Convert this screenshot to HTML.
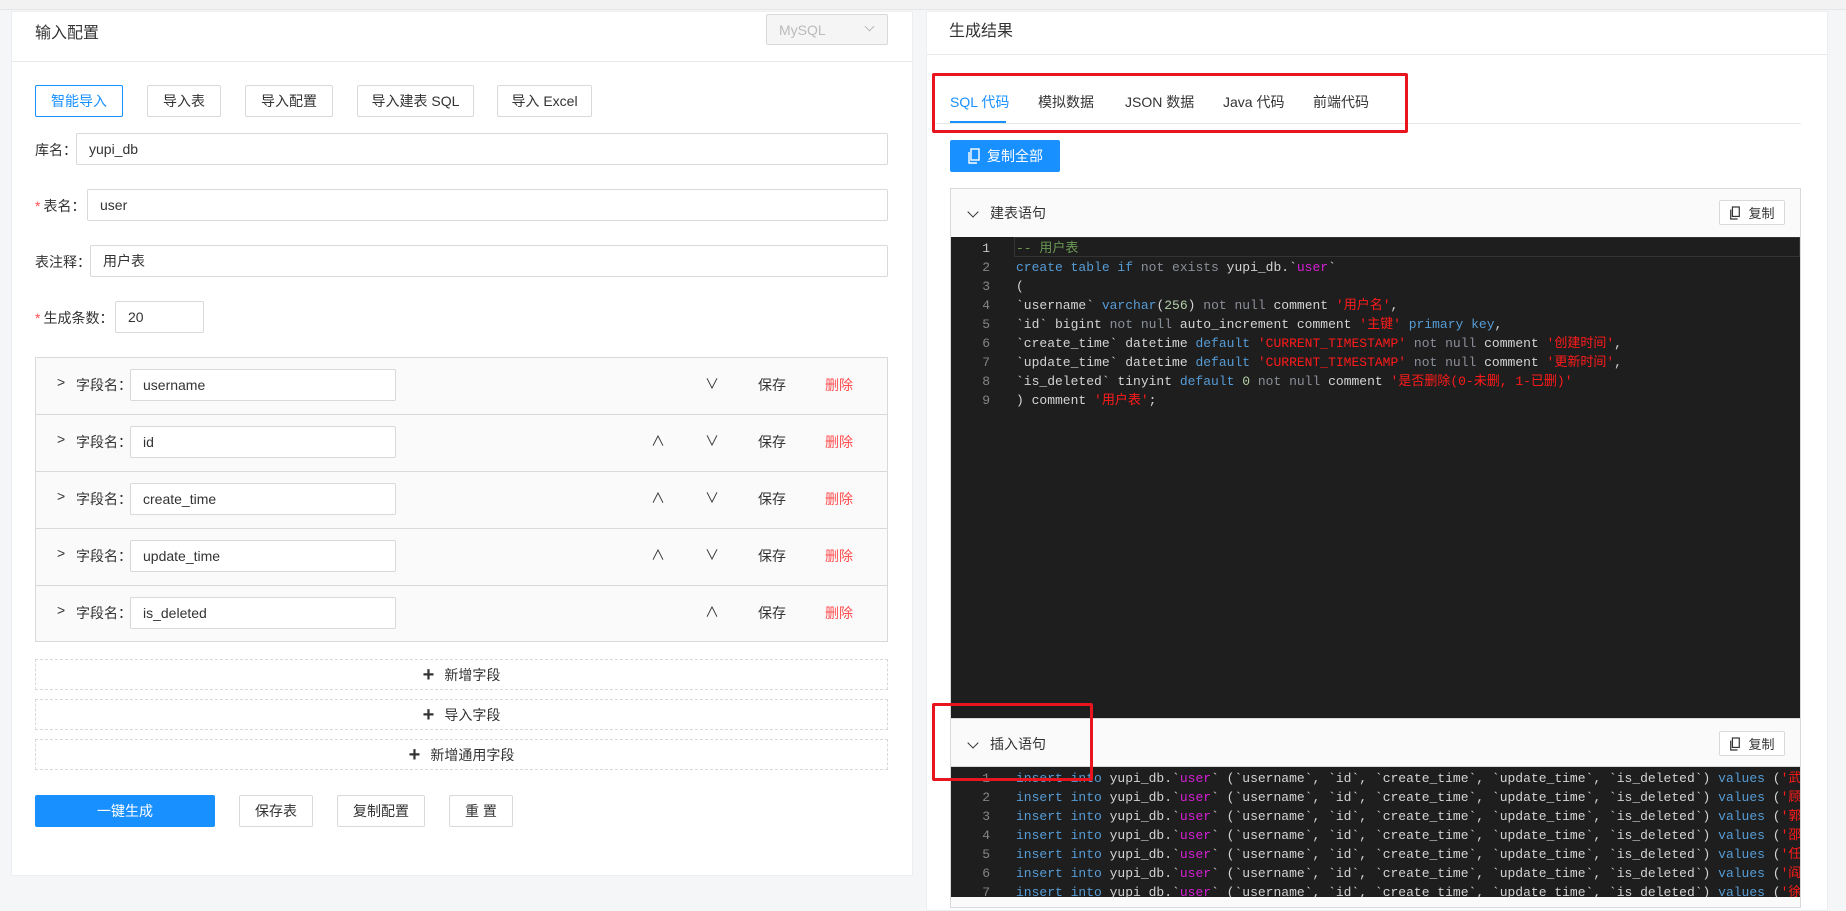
<!DOCTYPE html>
<html><head><meta charset="utf-8"><style>
*{box-sizing:border-box;margin:0;padding:0}
body{width:1846px;height:897px;overflow:hidden;background:#f5f6f8;font-family:"Liberation Sans","Noto Sans CJK SC",sans-serif;font-size:14px;color:#333;position:relative}
.a{position:absolute}
.card{background:#fff;border:1px solid #eceef1}
.btn{position:absolute;border:1px solid #d9d9d9;background:#fff;border-radius:2px;display:flex;align-items:center;justify-content:center;font-size:14px;color:#333}
.inp{position:absolute;border:1px solid #d9d9d9;background:#fff;border-radius:2px;padding-left:12px;display:flex;align-items:center;font-size:14px;color:#333}
.lbl{position:absolute;font-size:14px;color:#333}
.req{color:#ff4d4f;margin-right:3px}
.row{position:absolute;left:35px;width:853px;height:57px}
.row .arrow{position:absolute;left:22px;top:17px;font-size:14px;color:#333}
.hl{position:absolute;left:35px;width:853px;height:1px;background:#d9d9d9}
.dash{position:absolute;left:35px;width:853px;height:31px;border:1px dashed #d9d9d9;display:flex;align-items:center;justify-content:center;font-size:14px;color:#333}
.dash b{font-size:20px;font-weight:bold;margin-right:10px;line-height:1}
.code{position:absolute;background:#1e1e1e;font-family:"Liberation Mono","DejaVu Sans Mono","Noto Sans CJK SC",monospace;font-size:13px;line-height:19px;color:#d4d4d4;overflow:hidden}
.code .ln{position:absolute;left:0;width:39px;text-align:right;color:#858585}
.code .tx{position:absolute;left:65px;white-space:pre}
.k{color:#569cd6}.g{color:#8b8f99}.s{color:#ff1a1a}.m{color:#d61fd6}.c{color:#6a9955}.n{color:#b5cea8}
.chev{display:inline-block;width:8px;height:8px;border-right:1.5px solid #333;border-bottom:1.5px solid #333}
</style></head><body>
<div class="a" style="left:0;top:0;width:1846px;height:10px;background:#f2f2f2;border-bottom:1px solid #e6e6e6"></div>

<!-- Left card -->
<div class="a card" style="left:11px;top:11px;width:902px;height:865px"></div>
<div class="lbl" style="left:35px;top:19px;font-size:16px">输入配置</div>
<div class="a" style="left:12px;top:61px;width:900px;height:1px;background:#e8e8e8"></div>
<div class="btn" style="left:766px;top:14px;width:122px;height:31px;background:#f5f5f5;color:#bbb;justify-content:flex-start;padding-left:12px">MySQL<span style="position:absolute;right:14px;top:8px;width:7px;height:7px;border-right:1px solid #bbb;border-bottom:1px solid #bbb;transform:rotate(45deg)"></span></div>

<div class="btn" style="left:35px;top:85px;width:88px;height:32px;border-color:#1890ff;color:#1890ff">智能导入</div>
<div class="btn" style="left:147px;top:85px;width:74px;height:32px">导入表</div>
<div class="btn" style="left:245px;top:85px;width:88px;height:32px">导入配置</div>
<div class="btn" style="left:357px;top:85px;width:117px;height:32px">导入建表 SQL</div>
<div class="btn" style="left:497px;top:85px;width:95px;height:32px">导入 Excel</div>

<div class="lbl" style="left:35px;top:140px">库名：</div>
<div class="inp" style="left:76px;top:133px;width:812px;height:32px">yupi_db</div>
<div class="lbl" style="left:35px;top:196px"><span class="req">*</span>表名：</div>
<div class="inp" style="left:87px;top:189px;width:801px;height:32px">user</div>
<div class="lbl" style="left:35px;top:252px">表注释：</div>
<div class="inp" style="left:90px;top:245px;width:798px;height:32px">用户表</div>
<div class="lbl" style="left:35px;top:308px"><span class="req">*</span>生成条数：</div>
<div class="inp" style="left:115px;top:301px;width:89px;height:32px">20</div>

<div class="a" style="left:35px;top:357px;width:853px;height:285px;border:1px solid #d9d9d9;background:#fafafa"></div>
<div class="hl" style="top:414px"></div>
<div class="hl" style="top:471px"></div>
<div class="hl" style="top:528px"></div>
<div class="hl" style="top:585px"></div>
<div class="row" style="top:357px"><span class="arrow">&gt;</span><span class="lbl" style="left:41px;top:18px">字段名：</span><div class="inp" style="left:95px;top:12px;width:266px;height:32px">username</div><span class="lbl" style="left:670px;top:17px">∨</span><span class="lbl" style="left:723px;top:18px">保存</span><span class="lbl" style="left:790px;top:18px;color:#ff4d4f">删除</span></div>
<div class="row" style="top:414px"><span class="arrow">&gt;</span><span class="lbl" style="left:41px;top:18px">字段名：</span><div class="inp" style="left:95px;top:12px;width:266px;height:32px">id</div><span class="lbl" style="left:616px;top:17px">∧</span><span class="lbl" style="left:670px;top:17px">∨</span><span class="lbl" style="left:723px;top:18px">保存</span><span class="lbl" style="left:790px;top:18px;color:#ff4d4f">删除</span></div>
<div class="row" style="top:471px"><span class="arrow">&gt;</span><span class="lbl" style="left:41px;top:18px">字段名：</span><div class="inp" style="left:95px;top:12px;width:266px;height:32px">create_time</div><span class="lbl" style="left:616px;top:17px">∧</span><span class="lbl" style="left:670px;top:17px">∨</span><span class="lbl" style="left:723px;top:18px">保存</span><span class="lbl" style="left:790px;top:18px;color:#ff4d4f">删除</span></div>
<div class="row" style="top:528px"><span class="arrow">&gt;</span><span class="lbl" style="left:41px;top:18px">字段名：</span><div class="inp" style="left:95px;top:12px;width:266px;height:32px">update_time</div><span class="lbl" style="left:616px;top:17px">∧</span><span class="lbl" style="left:670px;top:17px">∨</span><span class="lbl" style="left:723px;top:18px">保存</span><span class="lbl" style="left:790px;top:18px;color:#ff4d4f">删除</span></div>
<div class="row" style="top:585px"><span class="arrow">&gt;</span><span class="lbl" style="left:41px;top:18px">字段名：</span><div class="inp" style="left:95px;top:12px;width:266px;height:32px">is_deleted</div><span class="lbl" style="left:670px;top:17px">∧</span><span class="lbl" style="left:723px;top:18px">保存</span><span class="lbl" style="left:790px;top:18px;color:#ff4d4f">删除</span></div>

<div class="dash" style="top:659px"><b>+</b>新增字段</div>
<div class="dash" style="top:699px"><b>+</b>导入字段</div>
<div class="dash" style="top:739px"><b>+</b>新增通用字段</div>

<div class="btn" style="left:35px;top:795px;width:180px;height:32px;background:#1890ff;border-color:#1890ff;color:#fff">一键生成</div>
<div class="btn" style="left:239px;top:795px;width:74px;height:32px">保存表</div>
<div class="btn" style="left:337px;top:795px;width:88px;height:32px">复制配置</div>
<div class="btn" style="left:449px;top:795px;width:64px;height:32px">重 置</div>

<!-- Right card -->
<div class="a card" style="left:926px;top:11px;width:902px;height:900px"></div>
<div class="lbl" style="left:949px;top:17px;font-size:16px">生成结果</div>
<div class="a" style="left:927px;top:54px;width:900px;height:1px;background:#e8e8e8"></div>
<div class="lbl" style="left:950px;top:92px;color:#1890ff">SQL 代码</div>
<div class="lbl" style="left:1038px;top:92px">模拟数据</div>
<div class="lbl" style="left:1125px;top:92px">JSON 数据</div>
<div class="lbl" style="left:1223px;top:92px">Java 代码</div>
<div class="lbl" style="left:1313px;top:92px">前端代码</div>
<div class="a" style="left:935px;top:123px;width:866px;height:1px;background:#e8e8e8"></div>
<div class="a" style="left:950px;top:121px;width:56px;height:2px;background:#1890ff"></div>
<div class="a" style="left:932px;top:73px;width:476px;height:60px;border:3px solid #e8141e;border-radius:2px"></div>

<div class="btn" style="left:950px;top:140px;width:110px;height:32px;background:#1890ff;border-color:#1890ff;color:#fff"><svg width="14" height="16" viewBox="0 0 14 16" style="margin-right:6px"><rect x="4" y="1" width="8" height="11" fill="none" stroke="#fff" stroke-width="1.4"/><path d="M2 4v11h8" fill="none" stroke="#fff" stroke-width="1.4"/></svg>复制全部</div>

<div class="a" style="left:950px;top:188px;width:851px;height:720px;border:1px solid #d9d9d9;background:#fafafa"></div>
<div class="a" style="left:969px;top:203px"><span class="chev" style="transform:rotate(45deg)"></span></div>
<div class="lbl" style="left:990px;top:203px">建表语句</div>
<div class="btn" style="left:1719px;top:200px;width:66px;height:25px;font-size:13px"><svg width="12" height="14" viewBox="0 0 14 16" style="margin-right:7px"><rect x="4" y="1" width="8" height="11" fill="none" stroke="#333" stroke-width="1.4"/><path d="M2 4v11h8" fill="none" stroke="#333" stroke-width="1.4"/></svg>复制</div>

<div class="code" style="left:951px;top:237px;width:849px;height:481px">
<div class="a" style="left:63px;top:0;width:786px;height:20px;border:1px solid #333"></div>
<div class="ln" style="top:2px;color:#c6c6c6">1<br><span style="color:#858585">2<br>3<br>4<br>5<br>6<br>7<br>8<br>9</span></div>
<div class="tx" style="top:2px"><span class="c">-- 用户表</span>
<span class="k">create table if</span> <span class="g">not exists</span> yupi_db.`<span class="m">user</span>`
(
`username` <span class="k">varchar</span>(<span class="n">256</span>) <span class="g">not null</span> comment <span class="s">'用户名'</span>,
`id` bigint <span class="g">not null</span> auto_increment comment <span class="s">'主键'</span> <span class="k">primary key</span>,
`create_time` datetime <span class="k">default</span> <span class="s">'CURRENT_TIMESTAMP'</span> <span class="g">not null</span> comment <span class="s">'创建时间'</span>,
`update_time` datetime <span class="k">default</span> <span class="s">'CURRENT_TIMESTAMP'</span> <span class="g">not null</span> comment <span class="s">'更新时间'</span>,
`is_deleted` tinyint <span class="k">default</span> <span class="n">0</span> <span class="g">not null</span> comment <span class="s">'是否删除(0-未删, 1-已删)'</span>
) comment <span class="s">'用户表'</span>;</div>
</div>

<div class="a" style="left:951px;top:718px;width:849px;height:49px;background:#fafafa;border-top:1px solid #d9d9d9;border-bottom:1px solid #d9d9d9"></div>
<div class="a" style="left:969px;top:734px"><span class="chev" style="transform:rotate(45deg)"></span></div>
<div class="lbl" style="left:990px;top:734px">插入语句</div>
<div class="btn" style="left:1719px;top:731px;width:66px;height:25px;font-size:13px"><svg width="12" height="14" viewBox="0 0 14 16" style="margin-right:7px"><rect x="4" y="1" width="8" height="11" fill="none" stroke="#333" stroke-width="1.4"/><path d="M2 4v11h8" fill="none" stroke="#333" stroke-width="1.4"/></svg>复制</div>

<div class="code" style="left:951px;top:767px;width:849px;height:130px">
<div class="ln" style="top:2px">1<br>2<br>3<br>4<br>5<br>6<br>7</div>
<div class="tx" style="top:2px"><span class="k">insert into</span> yupi_db.`<span class="m">user</span>` (`username`, `id`, `create_time`, `update_time`, `is_deleted`) <span class="k">values</span> (<span class="s">'武金</span>
<span class="k">insert into</span> yupi_db.`<span class="m">user</span>` (`username`, `id`, `create_time`, `update_time`, `is_deleted`) <span class="k">values</span> (<span class="s">'顾明</span>
<span class="k">insert into</span> yupi_db.`<span class="m">user</span>` (`username`, `id`, `create_time`, `update_time`, `is_deleted`) <span class="k">values</span> (<span class="s">'郭峻</span>
<span class="k">insert into</span> yupi_db.`<span class="m">user</span>` (`username`, `id`, `create_time`, `update_time`, `is_deleted`) <span class="k">values</span> (<span class="s">'邵伟</span>
<span class="k">insert into</span> yupi_db.`<span class="m">user</span>` (`username`, `id`, `create_time`, `update_time`, `is_deleted`) <span class="k">values</span> (<span class="s">'任鹏</span>
<span class="k">insert into</span> yupi_db.`<span class="m">user</span>` (`username`, `id`, `create_time`, `update_time`, `is_deleted`) <span class="k">values</span> (<span class="s">'阎锦</span>
<span class="k">insert into</span> yupi_db.`<span class="m">user</span>` (`username`, `id`, `create_time`, `update_time`, `is_deleted`) <span class="k">values</span> (<span class="s">'徐昊</span></div>
</div>

<div class="a" style="left:932px;top:703px;width:161px;height:78px;border:3px solid #e8141e;border-radius:2px"></div>
<div class="a" style="left:1829px;top:11px;width:17px;height:886px;background:#f5f6f8"></div>
</body></html>
